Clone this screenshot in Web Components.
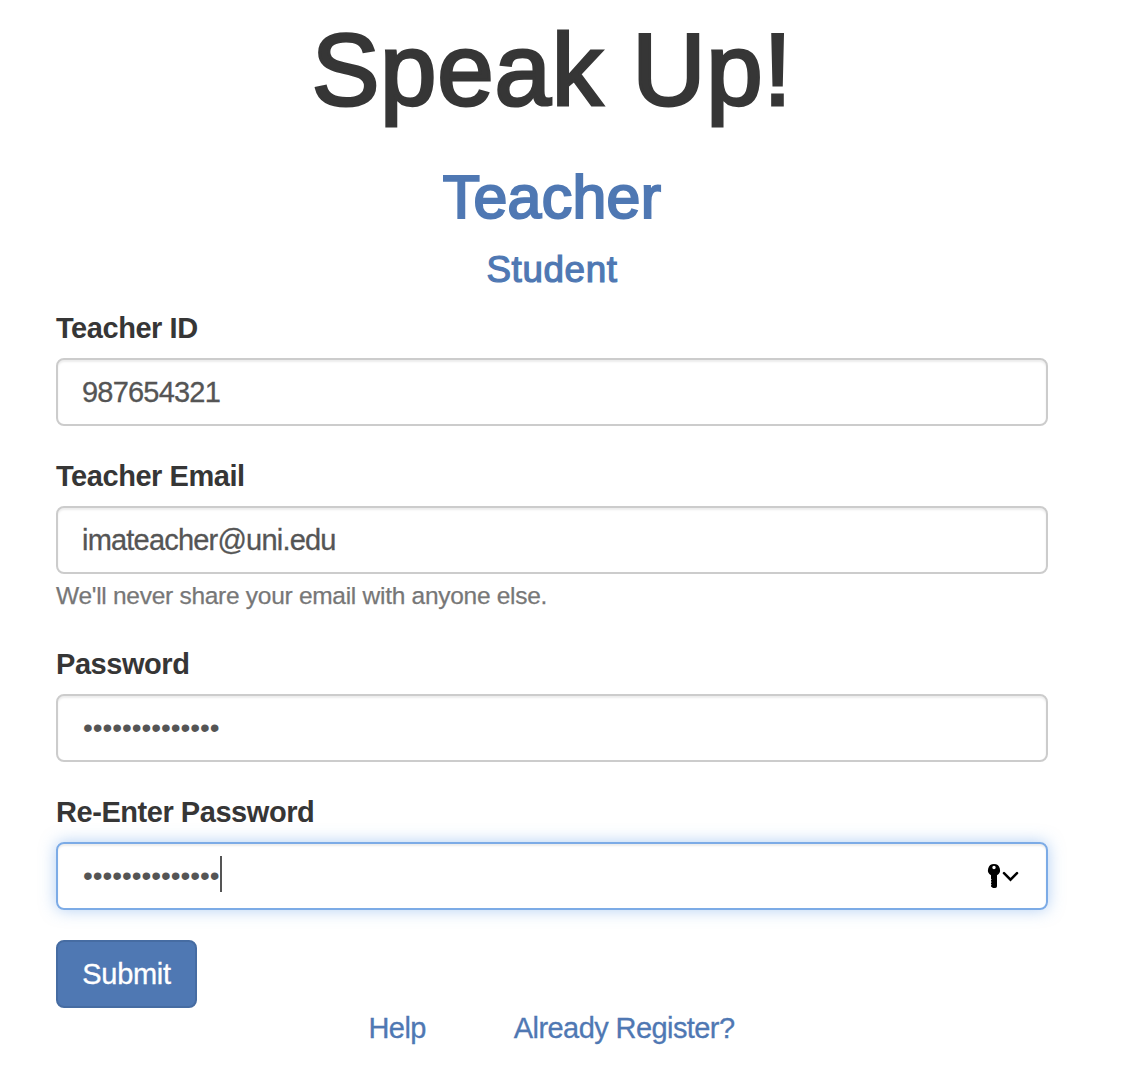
<!DOCTYPE html>
<html lang="en">
<head>
<meta charset="utf-8">
<title>Speak Up!</title>
<style>
body { margin: 0; background: #fff; color: #363636; font: 29px/40px "Liberation Sans", Arial, sans-serif; overflow: hidden; }
</style>
</head>
<body>
<register-page></register-page>
<script>
function define(name, html) {
  const template = document.createElement('template');
  template.innerHTML = html;
  customElements.define(name, class extends HTMLElement {
    constructor() {
      super();
      this.attachShadow({ mode: 'open' }).append(template.content.cloneNode(true));
    }
  });
}

define('page-title', `
<style>
:host { display: block; text-align: center; white-space: nowrap; }
h1 { margin: 0; font-weight: 400; font-size: 101.5px; line-height: 110px; letter-spacing: .75px; -webkit-text-stroke: 3px #363636; }
</style>
<h1><slot></slot></h1>`);

define('role-tab', `
<style>
:host { display: block; text-align: center; color: #4f78b3; font-size: 36.8px; line-height: 42px; letter-spacing: .6px; -webkit-text-stroke: 1.2px #4f78b3; }
:host([active]) { font-size: 60.8px; line-height: 66px; letter-spacing: .3px; -webkit-text-stroke-width: 2.2px; }
</style>
<slot></slot>`);

define('key-icon', `
<style>:host { display: block; width: 34px; height: 28px; } svg { display: block; }</style>
<svg width="34" height="28" viewBox="0 0 34 28">
<path fill="#000" fill-rule="evenodd" d="M8 2a6 6 0 0 1 3 11.2V24.2a1.8 1.8 0 0 1-1.8 1.8H7L5 24.5v-1l.7-.8-.7-.8v-1l.7-.8-.7-.8v-1l.7-.8-.7-.8v-3.5A6 6 0 0 1 8 2Zm0 1.8a1.7 1.7 0 1 0 0 3.4a1.7 1.7 0 0 0 0-3.4Z"/>
<path d="m18 11.2 6.5 6.5 6.5-6.5" fill="none" stroke="#000" stroke-width="2.5" stroke-linecap="round"/>
</svg>`);

define('form-field', `
<style>
:host { display: block; margin-bottom: 30px; }
.label { height: 40px; margin-bottom: 10px; font-weight: 700; letter-spacing: -.45px; }
.box { box-sizing: border-box; height: 68px; padding: 0 24px; border: 2px solid #ccc; border-radius: 8px; display: flex; align-items: center; color: #555; letter-spacing: -.8px; -webkit-text-stroke: .3px #555; box-shadow: inset 0 2px 2px rgba(0,0,0,.075); }
:host([secret]) .box { padding-left: 25px; font-size: 28px; letter-spacing: -.05px; -webkit-text-stroke: 0; }
:host([focused]) .box { border-color: #7cabe6; box-shadow: inset 0 2px 2px rgba(0,0,0,.075), 0 0 16px rgba(102,160,233,.5); }
.caret { display: none; width: 2px; height: 36px; margin: -4px 0 0 0; background: #555; }
:host([focused]) .caret { display: block; }
.end { margin-left: auto; }
::slotted([slot=hint]) { display: block; height: 40px; line-height: 44px; font-size: 24.5px; color: #777; letter-spacing: -.28px; -webkit-text-stroke: .25px #777; }
</style>
<div class="label"><slot name="label"></slot></div>
<div class="box"><slot></slot><i class="caret"></i><div class="end"><slot name="end"></slot></div></div>
<slot name="hint"></slot>`);

define('submit-button', `
<style>
:host { display: block; }
button { display: block; box-sizing: border-box; width: 141px; height: 68px; padding: 0; border: 2px solid #466ca2; border-radius: 8px; background: #4f78b3; color: #fff; font: inherit; letter-spacing: -.3px; -webkit-text-stroke: .3px #fff; }
</style>
<button type="button"><slot></slot></button>`);

define('text-link', `
<style>
:host { display: block; } a { color: #4f78b3; text-decoration: none; letter-spacing: -.58px; white-space: nowrap; -webkit-text-stroke: .3px #4f78b3; }
</style>
<a href="#"><slot></slot></a>`);

define('register-page', `
<style>
:host { display: block; box-sizing: border-box; width: 1124px; height: 1086px; padding: 15px 76px 0 56px; }
role-tab[active] { margin: 39px 0 19px; }
form { margin: 17px 0 0; }
nav { display: flex; gap: 88px; padding-left: 312.5px; }
key-icon { margin-right: 2px; }
</style>
<page-title>Speak Up!</page-title>
<role-tab active>Teacher</role-tab>
<role-tab>Student</role-tab>
<form>
<form-field><span slot="label">Teacher ID</span><span>987654321</span></form-field>
<form-field><span slot="label">Teacher Email</span><span>imateacher@uni.edu</span><span slot="hint">We'll never share your email with anyone else.</span></form-field>
<form-field secret><span slot="label">Password</span><span>••••••••••••••</span></form-field>
<form-field secret focused><span slot="label">Re-Enter Password</span><span>••••••••••••••</span><key-icon slot="end"></key-icon></form-field>
<submit-button>Submit</submit-button>
</form>
<nav><text-link>Help</text-link><text-link>Already Register?</text-link></nav>`);
</script>
</body>
</html>
